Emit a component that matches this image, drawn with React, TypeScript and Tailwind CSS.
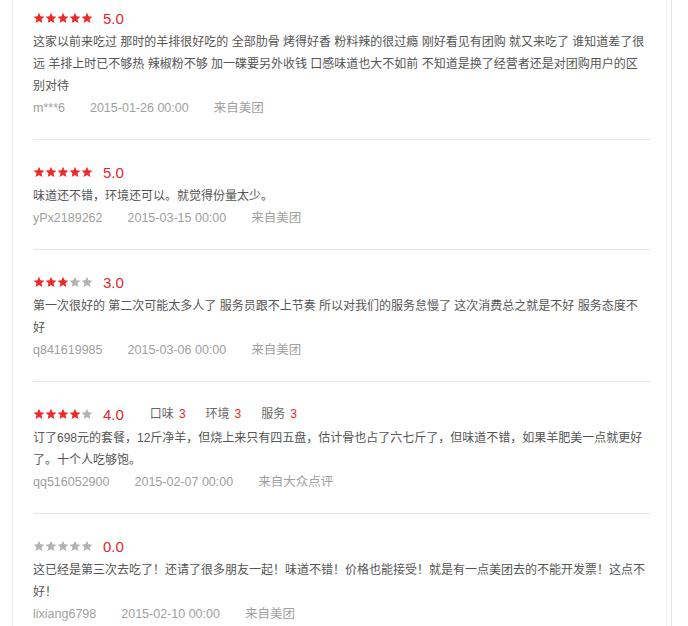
const REVIEWS = [
  {
    stars: 5,
    score: "5.0",
    text: "这家以前来吃过 那时的羊排很好吃的 全部肋骨 烤得好香 粉料辣的很过瘾 刚好看见有团购 就又来吃了 谁知道差了很远 羊排上时已不够热 辣椒粉不够 加一碟要另外收钱 口感味道也大不如前 不知道是换了经营者还是对团购用户的区别对待",
    user: "m***6",
    date: "2015-01-26 00:00",
    from: "来自美团",
  },
  {
    stars: 5,
    score: "5.0",
    text: "味道还不错，环境还可以。就觉得份量太少。",
    user: "yPx2189262",
    date: "2015-03-15 00:00",
    from: "来自美团",
  },
  {
    stars: 3,
    score: "3.0",
    text: "第一次很好的 第二次可能太多人了 服务员跟不上节奏 所以对我们的服务怠慢了 这次消费总之就是不好 服务态度不好",
    user: "q841619985",
    date: "2015-03-06 00:00",
    from: "来自美团",
  },
  {
    stars: 4,
    score: "4.0",
    subs: [
      { l: "口味", v: 3 },
      { l: "环境", v: 3 },
      { l: "服务", v: 3 },
    ],
    text: "订了698元的套餐，12斤净羊，但烧上来只有四五盘，估计骨也占了六七斤了，但味道不错，如果羊肥美一点就更好了。十个人吃够饱。",
    user: "qq516052900",
    date: "2015-02-07 00:00",
    from: "来自大众点评",
  },
  {
    stars: 0,
    score: "0.0",
    text: "这已经是第三次去吃了！还请了很多朋友一起！味道不错！价格也能接受！就是有一点美团去的不能开发票！这点不好！",
    user: "lixiang6798",
    date: "2015-02-10 00:00",
    from: "来自美团",
  },
];

function Star({ on }: { on: boolean }) {
  return (
    <svg width="12" height="12" viewBox="0 0 24 24" className="block">
      <path
        d="M12 1.5l3.1 7.1 7.7.7-5.8 5.1 1.7 7.6L12 18l-6.7 4 1.7-7.6-5.8-5.1 7.7-.7z"
        fill={on ? "#ee2a2a" : "#b3b3b3"}
      />
    </svg>
  );
}

export default function App() {
  return (
    <div
      className="flex bg-white min-h-[626px]"
      style={{ fontFamily: '"Liberation Sans", "Noto Sans CJK SC", sans-serif' }}
    >
      <div className="ml-[12px] w-[655px] border-l border-r border-[#ececec] pl-[20px]">
        <ul className="w-[614px]">
          {REVIEWS.map((r, i) => (
            <li
              key={r.user}
              className={
                i === 0
                  ? "pt-[5px] pb-[20px] border-b border-[#e8e8e8] w-[617px]"
                  : i === REVIEWS.length - 1
                    ? "pt-[19px] pb-[20px] w-[617px]"
                    : "pt-[19px] pb-[20px] border-b border-[#e8e8e8] w-[617px]"
              }
            >
              <div className="flex items-center h-[26px]">
                <div className="flex">
                  {[0, 1, 2, 3, 4].map((n) => (
                    <Star key={n} on={n < r.stars} />
                  ))}
                </div>
                <span className="ml-[10px] text-[15px] text-[#e3262b] leading-none">
                  {r.score}
                </span>
                {r.subs && (
                  <div className="flex ml-[26px] gap-[20px] text-[12px] text-[#666]">
                    {r.subs.map((s) => (
                      <span key={s.l}>
                        {s.l}
                        <span className="ml-[5px] text-[#e3262b]">{s.v}</span>
                      </span>
                    ))}
                  </div>
                )}
              </div>
              <p className="w-[614px] text-[12px] leading-[22px] text-[#555]">{r.text}</p>
              <div className="flex gap-[25px] text-[12.5px] leading-[22px] text-[#a0a0a0]">
                <span>{r.user}</span>
                <span>{r.date}</span>
                <span>{r.from}</span>
              </div>
            </li>
          ))}
        </ul>
      </div>
      <div className="ml-[4px] w-px bg-[#e6e6e6]" />
    </div>
  );
}
